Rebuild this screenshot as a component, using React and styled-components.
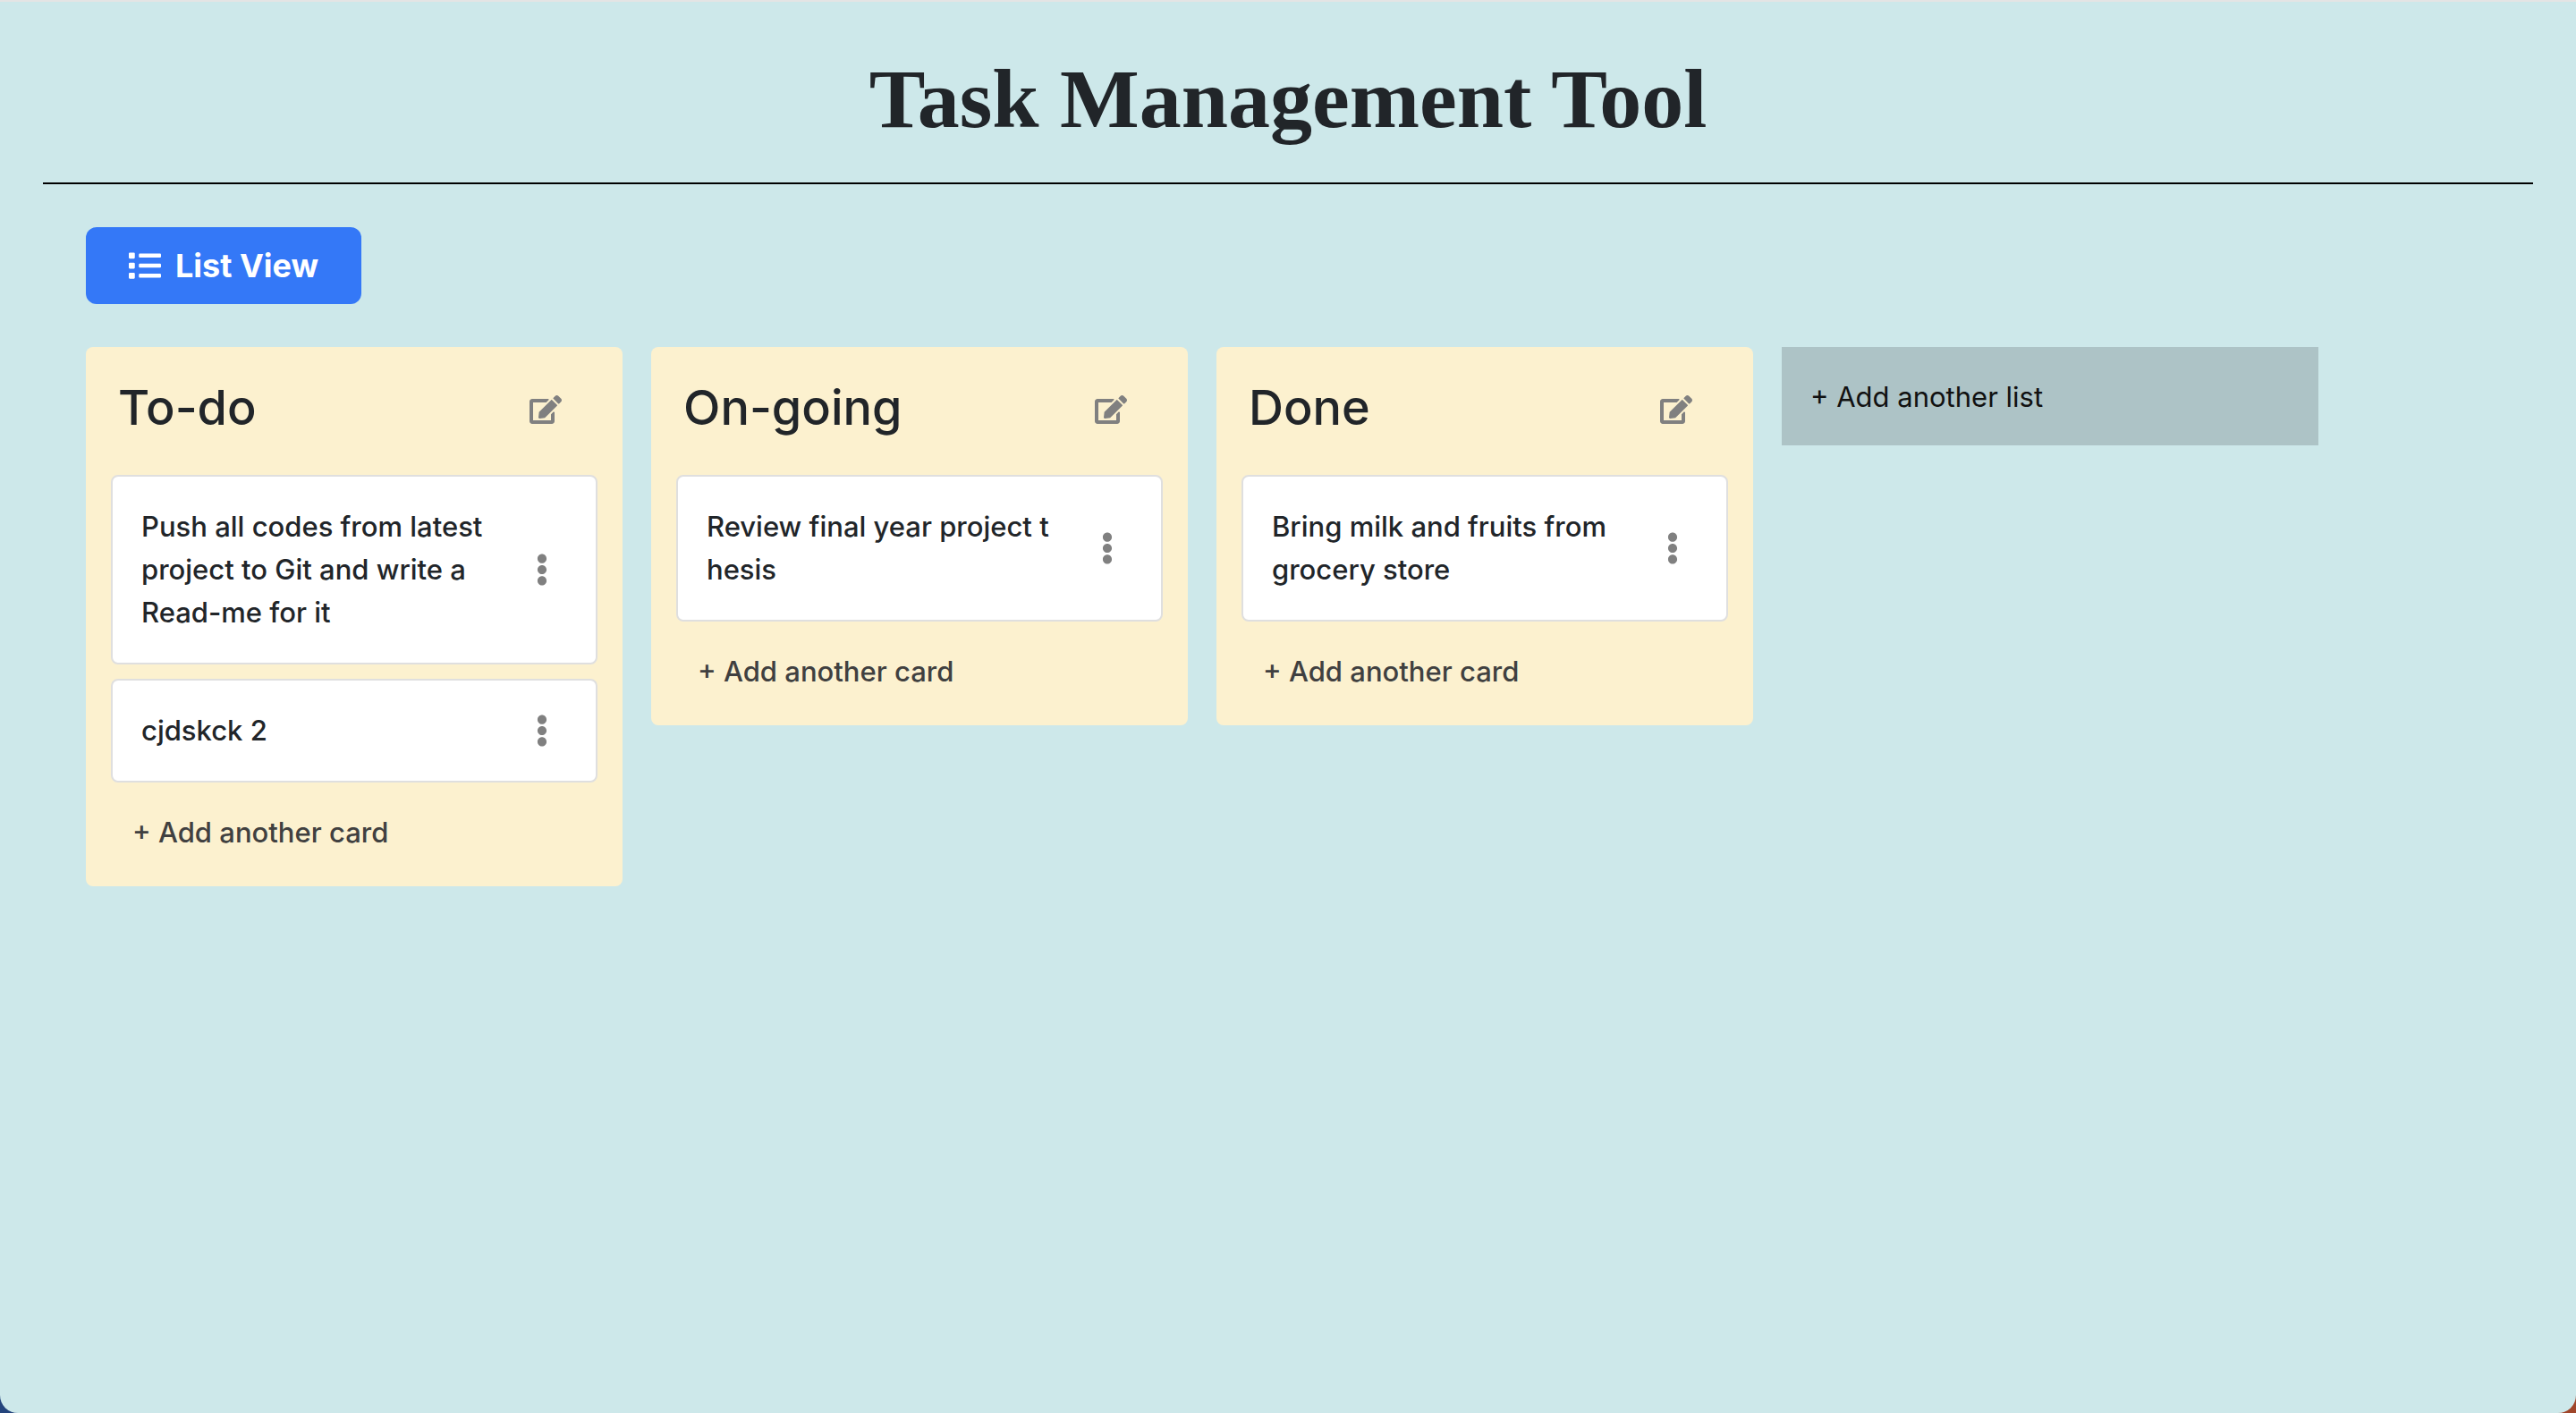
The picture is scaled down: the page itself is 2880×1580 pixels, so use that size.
import React from "react";
import styled, { createGlobalStyle } from "styled-components";
import { FaEdit, FaEllipsisV, FaList } from "react-icons/fa";

const GlobalStyle = createGlobalStyle`
  *, *::before, *::after { box-sizing: border-box; }
  body {
    margin: 0;
    background: linear-gradient(90deg, #24447c 50%, #a0452a 50%);
    color: #212529;
    font-family: Inter, "Liberation Sans", sans-serif;
    font-size: 31px;
    font-weight: 500;
    line-height: 48px;
  }
  button { font: inherit; color: inherit; border: 0; background: none; cursor: pointer; }
`;

const Page = styled.div`
  min-height: 100vh;
  padding: 0 48px;
  border-top: 2px solid #e4e4e4;
  border-radius: 0 0 20px 20px;
  background: #cde8ea;
`;

const Header = styled.header`
  padding: 58px 0 44px;
  border-bottom: 2px solid #000;
  text-align: center;
`;

const Title = styled.h1`
  margin: 0;
  font-family: "Liberation Serif", serif;
  font-size: 94px;
  font-weight: 700;
  line-height: 100px;
`;

const Main = styled.main`
  padding: 48px;
`;

const ViewButton = styled.button`
  display: inline-flex;
  align-items: center;
  gap: 16px;
  height: 86px;
  padding: 0 48px;
  border-radius: 12px;
  background: #3478f7;
  color: #fff;
  font-size: 36px;
  font-weight: 700;
`;

const Board = styled.div`
  display: flex;
  flex-wrap: wrap;
  align-items: flex-start;
  gap: 32px;
  margin-top: 48px;
`;

const List = styled.section`
  width: 600px;
  padding: 28px 28px 20px;
  border-radius: 8px;
  background: #fcf1cf;
`;

const ListHeader = styled.div`
  display: flex;
  align-items: center;
  justify-content: space-between;
  height: 84px;
  padding: 0 40px 0 8px;
`;

const ListTitle = styled.h2`
  margin: 0;
  padding-bottom: 4px;
  font-size: 54px;
  font-weight: 500;
`;

const IconButton = styled.button`
  display: flex;
  padding: 0;
  color: #808080;
`;

const Cards = styled.ul`
  display: grid;
  gap: 16px;
  margin: 31px 0 16px;
  padding: 0;
  list-style: none;
`;

const Card = styled.li`
  display: flex;
  align-items: center;
  justify-content: space-between;
  padding: 32px 42px 32px 32px;
  border: 2px solid #dfdfdf;
  border-radius: 8px;
  background: #fff;
`;

const CardText = styled.p`
  margin: 0;
  white-space: pre;
`;

const AddCard = styled.button`
  width: 100%;
  padding: 16px 24px;
  color: #404040;
  text-align: left;
`;

const AddList = styled.button`
  width: 600px;
  padding: 32px 32px 30px;
  background: #adc3c6;
  color: #111;
  font-weight: 400;
  text-align: left;
`;

const lists = [
  {
    title: "To-do",
    cards: [
      "Push all codes from latest\nproject to Git and write a\nRead-me for it",
      "cjdskck 2",
    ],
  },
  { title: "On-going", cards: ["Review final year project t\nhesis"] },
  { title: "Done", cards: ["Bring milk and fruits from\ngrocery store"] },
];

export default function App() {
  return (
    <>
      <GlobalStyle />
      <Page>
        <Header>
          <Title>Task Management Tool</Title>
        </Header>
        <Main>
          <ViewButton type="button">
            <FaList size={36} />
            List View
          </ViewButton>
          <Board>
            {lists.map((list) => (
              <List key={list.title}>
                <ListHeader>
                  <ListTitle>{list.title}</ListTitle>
                  <IconButton type="button" aria-label="Edit list">
                    <FaEdit size={36} />
                  </IconButton>
                </ListHeader>
                <Cards>
                  {list.cards.map((text) => (
                    <Card key={text}>
                      <CardText>{text}</CardText>
                      <IconButton type="button" aria-label="Card menu">
                        <FaEllipsisV size={36} />
                      </IconButton>
                    </Card>
                  ))}
                </Cards>
                <AddCard type="button">+ Add another card</AddCard>
              </List>
            ))}
            <AddList type="button">+ Add another list</AddList>
          </Board>
        </Main>
      </Page>
    </>
  );
}
